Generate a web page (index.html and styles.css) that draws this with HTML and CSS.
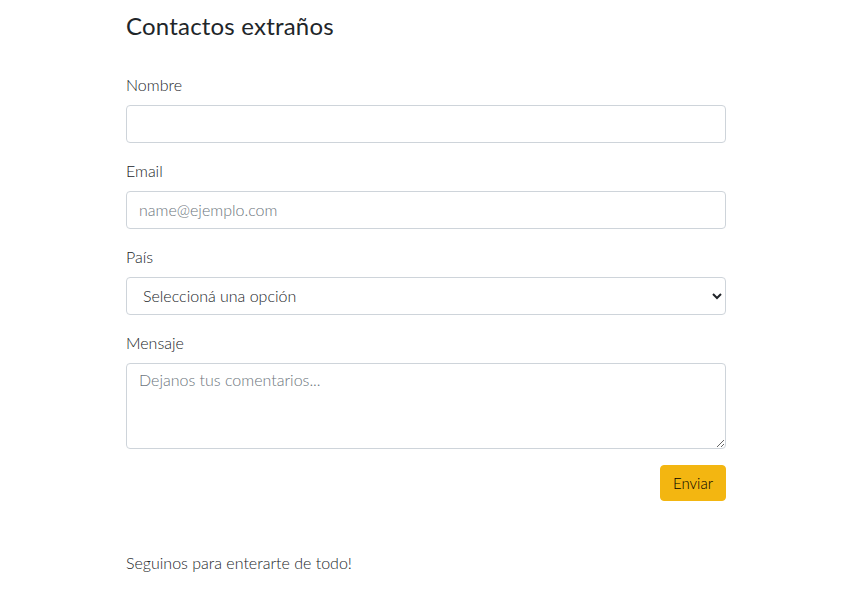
FILE: index.html
```html
<!DOCTYPE html>
<html lang="es">
<head>
<meta charset="utf-8">
<title>Contactos extraños</title>
<link rel="stylesheet" href="styles.css">
</head>
<body>
<main class="wrap">
  <h1 class="title">Contactos extraños</h1>
  <form class="form">
    <div class="group">
      <label class="label" for="nombre">Nombre</label>
      <input class="control" id="nombre" type="text">
    </div>
    <div class="group">
      <label class="label" for="email">Email</label>
      <input class="control" id="email" type="email" placeholder="name@ejemplo.com">
    </div>
    <div class="group">
      <label class="label" for="pais">País</label>
      <select class="control select" id="pais">
        <option>Seleccioná una opción</option>
      </select>
    </div>
    <div class="group">
      <label class="label" for="msg">Mensaje</label>
      <textarea class="control area" id="msg" rows="3" placeholder="Dejanos tus comentarios..."></textarea>
    </div>
    <div class="actions">
      <button class="btn" type="button">Enviar</button>
    </div>
  </form>
  <p class="follow">Seguinos para enterarte de todo!</p>
</main>
</body>
</html>
```
FILE: styles.css
```css
* { box-sizing: border-box; }
body {
  margin: 0;
  background: #fff;
  color: #212529;
  font-family: Lato, "Open Sans", sans-serif;
  font-size: 16px;
  font-weight: 300;
  line-height: 1.5;
}
.wrap {
  width: 600px;
  margin-left: 126px;
  padding-top: 12px;
}
.title {
  margin: 0 0 32px;
  font-size: 24px;
  font-weight: 400;
  line-height: 1.2;
  letter-spacing: 0.2px;
}
.group {
  display: flex;
  flex-direction: column;
  margin-bottom: 16px;
}
.label {
  margin-bottom: 8px;
  line-height: 24px;
}
.control {
  display: block;
  width: 100%;
  height: 38px;
  padding: 6px 12px;
  font-family: inherit;
  font-size: 16px;
  font-weight: 300;
  color: #212529;
  background: #fff;
  border: 1px solid #ced4da;
  border-radius: 4px;
}
.control::placeholder { color: #6c757d; }
.select { padding-left: 12px; }
.area {
  height: 86px;
  resize: vertical;
}
.actions {
  display: flex;
  justify-content: flex-end;
}
.btn {
  height: 36px;
  padding: 0 12px;
  font-family: inherit;
  font-size: 15px;
  font-weight: 300;
  color: #000;
  background: #f3b611;
  border: 1px solid #f3b611;
  border-radius: 4px;
}
.follow {
  margin: 50px 0 0;
}
```
